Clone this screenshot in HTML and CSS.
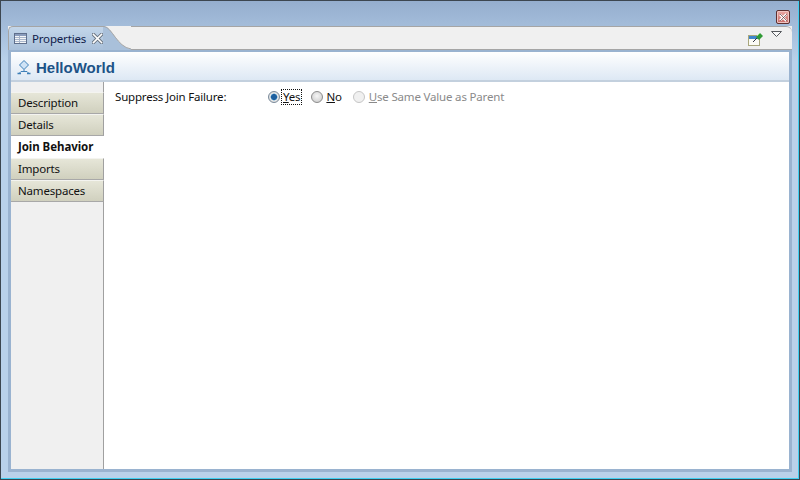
FILE: index.html
```html
<!DOCTYPE html>
<html lang="en">
<head>
<meta charset="utf-8">
<title>Properties</title>
<link rel="stylesheet" href="styles.css">
</head>
<body>
<div class="window">
  <div class="titlebar">
    <div class="close"><svg width="9" height="9" viewBox="0 0 9 9"><path d="M1 1.5 L7.5 8 M7.5 1 L1 7.5" stroke="#fff" stroke-width="2.4"/><path d="M1 1 L8 8 M8 1 L1 8" stroke="#5a3a3a" stroke-width=".7"/></svg></div>
  </div>
  <div class="view">
    <div class="tabstrip">
      <div class="tab">
        <svg class="tab-icon" width="13" height="11" viewBox="0 0 13 11"><rect x=".5" y=".5" width="12" height="10" fill="#f4f6f8" stroke="#5f6f8c"/><rect x="1" y="1" width="11" height="2" fill="#8a9cbc"/><path d="M1 4.5H12M1 6.5H12M1 8.5H12" stroke="#a9b6cb"/><path d="M5.5 3V10" stroke="#a9b6cb"/></svg>
        <span class="tab-label">Properties</span>
        <svg class="tab-x" width="11" height="11" viewBox="0 0 11 11"><path d="M1.5 1.5 L9.5 9.5 M9.5 1.5 L1.5 9.5" stroke="#6a7480" stroke-width="3.4" stroke-linecap="square"/><path d="M1.5 1.5 L9.5 9.5 M9.5 1.5 L1.5 9.5" stroke="#fff" stroke-width="1.6" stroke-linecap="square"/></svg>
      </div>
      <svg class="tab-curve" width="28" height="24" viewBox="0 0 28 24"><path d="M0 0 H1 C9 1 14 21 28 23 V24 H0Z" fill="#a9c0da"/><path d="M0 .5 H1 C9 1 14 21 28 23" fill="none" stroke="#a5a5a5"/></svg>
      <div class="strip-fill">
        <svg class="pin" width="15" height="14" viewBox="0 0 15 14"><rect x=".5" y="3.5" width="11" height="10" fill="#fbfbf4" stroke="#a8a67c"/><rect x="1" y="4" width="10" height="3" fill="#3f86cc"/><path d="M5 10 L9 6" stroke="#334" stroke-width="1"/><path d="M8 5 L12 1 L15 4 L11 8 Z" fill="#2f9a35"/><path d="M9 4 L12 1" stroke="#9be08e"/></svg>
        <svg class="menu" width="11" height="6" viewBox="0 0 11 6"><path d="M.5 .5 H10.5 L5.5 5.5 Z" fill="#f8f8f8" stroke="#55585c"/></svg>
      </div>
    </div>
    <div class="frame">
      <div class="header">
        <svg class="header-icon" width="16" height="16" viewBox="0 0 16 16"><path d="M8 1.5 L12.5 6 L8 10.5 L3.5 6 Z" fill="#cfe3f6" stroke="#3d7fb8"/><path d="M8 10.5 V12.5 M3 14.5 L5 12.5 H11 L13 14.5" fill="none" stroke="#3d7fb8"/><path d="M1.5 14.5H5M11 14.5H14.5" stroke="#3d7fb8" stroke-width="1.4"/></svg>
        <span class="header-title">HelloWorld</span>
      </div>
      <div class="body">
        <nav class="side">
          <div class="side-item">Description</div>
          <div class="side-item">Details</div>
          <div class="side-item active">Join Behavior</div>
          <div class="side-item">Imports</div>
          <div class="side-item">Namespaces</div>
        </nav>
        <main class="content">
          <span class="field-label">Suppress Join Failure:</span>
          <div class="radios">
            <span class="radio selected"></span><span class="radio-text focus"><u>Y</u>es</span>
            <span class="radio"></span><span class="radio-text"><u>N</u>o</span>
            <span class="radio disabled"></span><span class="radio-text dim"><u>U</u>se Same Value as Parent</span>
          </div>
        </main>
      </div>
    </div>
  </div>
</div>
</body>
</html>
```
FILE: styles.css
```css
* { box-sizing: border-box; }
html, body { margin: 0; padding: 0; }
body { width: 800px; height: 480px; overflow: hidden; font-family: "Noto Sans", sans-serif; font-size: 11.5px; letter-spacing: -.18px; color: #111; }
.window {
  width: 800px; height: 480px; display: flex; flex-direction: column;
  background: linear-gradient(#95aece 0, #a6bfdc 30px, #b9d1ea 60px, #b9d1ea 100%);
  border: 1px solid #3c4650;
  box-shadow: inset -1px -1px 0 #3fd0f2;
  padding: 0 7px 7px 7px;
}
.titlebar { height: 25px; display: flex; justify-content: flex-end; padding: 9px 2px 0 0; flex: none; }
.close {
  width: 14px; height: 14px; display: flex; align-items: center; justify-content: center;
  border: 1px solid #5e3030; border-radius: 2px; background: linear-gradient(#eaa8a4, #c86a66);
  box-shadow: inset 0 0 0 1px #f0c4c0;
}
.view { flex: 1; display: flex; flex-direction: column; min-height: 0; }
.tabstrip { height: 24px; display: flex; flex: none; background: #f0f0f0; }
.tab {
  width: 95px; display: flex; align-items: center; padding: 0 0 0 5px; flex: none;
  border-left: 1px solid #a5a5a5; border-top: 1px solid #a5a5a5; border-top-left-radius: 5px;
  background: linear-gradient(#c3d6ea, #a9c0da);
}
.tab-icon { flex: none; }
.tab-label { margin-left: 5px; width: 56px; flex: none; color: #10204a; }
.tab-x { margin-left: 4px; flex: none; }
.tab-curve { flex: none; display: block; }
.strip-fill {
  flex: 1; background: #f0f0f0; border-top: 1px solid #a5a5a5;
  border-bottom: 1px solid #a5a5a5; border-top-right-radius: 6px;
  display: flex; justify-content: flex-end; padding: 4px 10px 0 0; gap: 8px; align-items: flex-start;
}
.pin { margin-top: 1px; }
.frame {
  flex: 1; min-height: 0; display: flex; flex-direction: column;
  border: 3px solid #9ab3d0; border-top-width: 2px; background: #fff;
}
.header {
  height: 30px; flex: none; display: flex; align-items: center; padding: 2px 0 0 5px;
  background: linear-gradient(#fff, #dde8f4); border-bottom: 2px solid #c3d0de;
}
.header-icon { flex: none; }
.header-title { margin-left: 4px; font-family: "Liberation Sans", sans-serif; font-weight: bold; font-size: 15px; letter-spacing: 0; color: #1c5387; }
.body { flex: 1; min-height: 0; display: flex; }
.side {
  width: 93px; flex: none; background: #f0f0f0; border-right: 1px solid #a0a0a0;
  padding-top: 10px; display: flex; flex-direction: column;
}
.side-item {
  height: 22px; display: flex; align-items: center; padding: 0 0 2px 7px; margin-right: -1px;
  background: linear-gradient(#e6e6d8, #d0d0be);
  border-top: 1px solid #f4f4f0; border-bottom: 1px solid #a8a8a8; border-right: 1px solid #a0a0a0;
  color: #111;
}
.side-item.active { background: #fff; font-weight: 700; letter-spacing: -.06px; border-color: #fff; }
.content { flex: 1; display: flex; align-items: flex-start; padding: 7px 0 0 11px; }
.field-label { width: 153px; flex: none; line-height: 16px; }
.radios { display: flex; align-items: center; height: 16px; }
.radio {
  width: 12px; height: 12px; border-radius: 50%; flex: none; border: 1px solid #8c8c8c;
  background: radial-gradient(circle at 50% 40%, #f6f6f6, #c8c8c8);
}
.radio.selected { background: radial-gradient(circle, #1e5f9e 0 2.6px, #6aaedb 3.2px, #e8e8e8 3.8px, #c8c8c8); border-color: #7a8a9a; }
.radio.disabled { border-color: #c6c6c6; background: #f0f0f0; }
.radio-text { margin: 0 9px 0 1px; padding: 0 2px; line-height: 16px; }
.radio-text.focus { outline: 1px dotted #111; outline-offset: -1px; }
.radio-text.dim { color: #8a8a8a; margin-left: 2px; }
```
